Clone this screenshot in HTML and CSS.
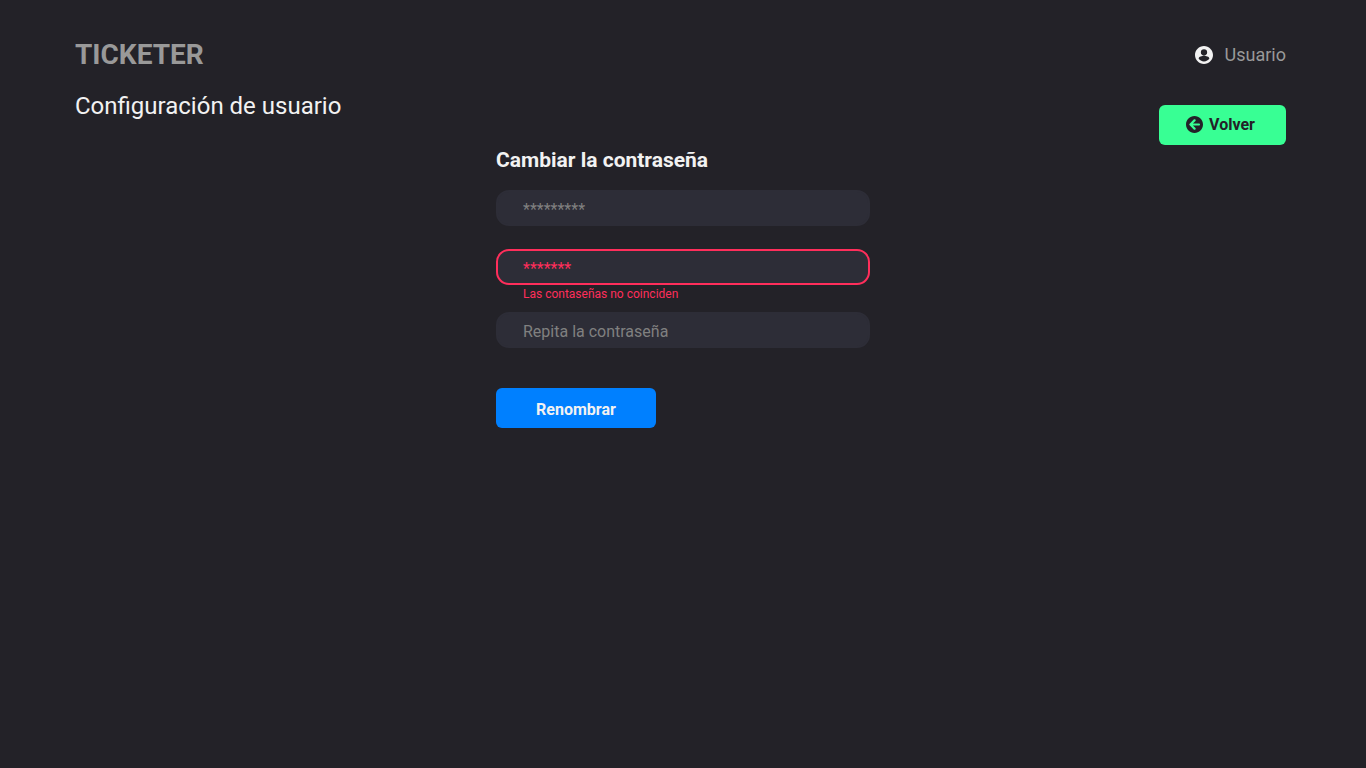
FILE: index.html
```html
<!DOCTYPE html>
<html lang="es">
<head>
<meta charset="utf-8">
<meta name="viewport" content="width=device-width, initial-scale=1">
<title>Ticketer - Configuración de usuario</title>
<link rel="stylesheet" href="styles.css">
</head>
<body>
<div class="page">
  <header class="topbar">
    <a class="brand" href="#">TICKETER</a>
    <a class="user" href="#">
      <svg class="user-icon" viewBox="2 2 20 20" aria-hidden="true"><path fill="currentColor" d="M12 2C6.480 2 2 6.480 2 12s4.480 10 10 10 10-4.480 10-10S17.520 2 12 2zm0 3.500a3.500 3.500 0 1 1 0 7 3.500 3.500 0 0 1 0-7zm0 13.700c-2.500 0-4.710-1.280-6-3.220.03-1.990 4-3.080 6-3.080s5.970 1.090 6 3.080c-1.290 1.940-3.500 3.220-6 3.220z"/></svg>
      <span>Usuario</span>
    </a>
  </header>
  <div class="title-row">
    <h1 class="title">Configuración de usuario</h1>
    <button class="button button-back" type="button">
      <svg class="back-icon" viewBox="8 8 496 496" aria-hidden="true"><path fill="currentColor" d="M256 504C119 504 8 393 8 256S119 8 256 8s248 111 248 248-111 248-248 248zm28.900-143.600L209.400 288H392c13.300 0 24-10.700 24-24v-16c0-13.300-10.700-24-24-24H209.400l75.500-72.400c9.700-9.300 9.900-24.800.4-34.300l-11-10.900c-9.400-9.400-24.600-9.400-33.900 0L107.700 239c-9.400 9.400-9.400 24.600 0 33.900l132.700 132.700c9.400 9.400 24.600 9.400 33.900 0l11-10.900c9.500-9.500 9.300-25-.4-34.300z"/></svg>
      <span>Volver</span>
    </button>
  </div>
  <main>
    <form class="form">
      <h2 class="form-title">Cambiar la contraseña</h2>
      <div class="field">
        <input class="input" type="text" placeholder="*********" aria-label="Contraseña actual">
      </div>
      <div class="field field-invalid">
        <input class="input" type="text" placeholder="*******" aria-label="Nueva contraseña" aria-invalid="true" aria-describedby="password-error">
        <p class="error" id="password-error">Las contaseñas no coinciden</p>
      </div>
      <div class="field">
        <input class="input" type="text" placeholder="Repita la contraseña" aria-label="Repita la contraseña">
      </div>
      <button class="button button-submit" type="submit">Renombrar</button>
    </form>
  </main>
</div>
</body>
</html>
```
FILE: styles.css
```css
* {
  box-sizing: border-box;
}

body {
  margin: 0;
  background: #232228;
  color: #f2f2f2;
  font-family: Roboto, "Liberation Sans", sans-serif;
  font-size: 16px;
}

h1,
h2,
p {
  margin: 0;
}

.page {
  padding-top: 38px;
}

.topbar,
.title-row {
  display: flex;
  justify-content: space-between;
  padding: 0 80px 0 75px;
}

.topbar {
  align-items: center;
}

.brand {
  color: #999;
  font-size: 28px;
  font-weight: 700;
  line-height: 34px;
  text-decoration: none;
}

.user {
  display: flex;
  align-items: center;
  gap: 12px;
  color: #999;
  font-size: 18px;
  line-height: 24px;
  text-decoration: none;
}

.user-icon {
  width: 18px;
  height: 18px;
  color: #f2f2f2;
}

.title-row {
  padding-top: 20px;
}

.title {
  font-size: 24px;
  font-weight: 400;
  line-height: 28px;
}

.button {
  height: 40px;
  border: 0;
  border-radius: 6px;
  font: inherit;
  font-weight: 700;
  cursor: pointer;
}

.button-back {
  display: flex;
  align-items: center;
  justify-content: center;
  gap: 6px;
  width: 127px;
  margin-top: 13px;
  padding: 0 4px 2px 0;
  background: #38ff94;
  color: #232228;
}

.back-icon {
  width: 17px;
  height: 17px;
}

.form {
  width: 374px;
  max-width: 100%;
  margin: 0 auto;
}

.form-title {
  margin-bottom: 15px;
  font-size: 21px;
  font-weight: 700;
  line-height: 30px;
}

.field {
  margin-bottom: 23px;
}

.field-invalid {
  margin-bottom: 8px;
}

.input {
  display: block;
  width: 100%;
  height: 36px;
  padding: 2px 25px 0;
  border: 2px solid #2d2d37;
  border-radius: 13px;
  outline: 0;
  background: #2d2d37;
  color: #f2f2f2;
  font: inherit;
}

.input::placeholder {
  color: #808080;
  opacity: 1;
}

.field-invalid .input {
  border-color: #ff2e5b;
}

.field-invalid .input::placeholder,
.error {
  color: #ff2e5b;
}

.error {
  padding-left: 27px;
  font-size: 12px;
  line-height: 19px;
}

.button-submit {
  width: 160px;
  margin-top: 17px;
  padding: 2px 0 0;
  background: #0080ff;
  color: #f2f2f2;
}
```
